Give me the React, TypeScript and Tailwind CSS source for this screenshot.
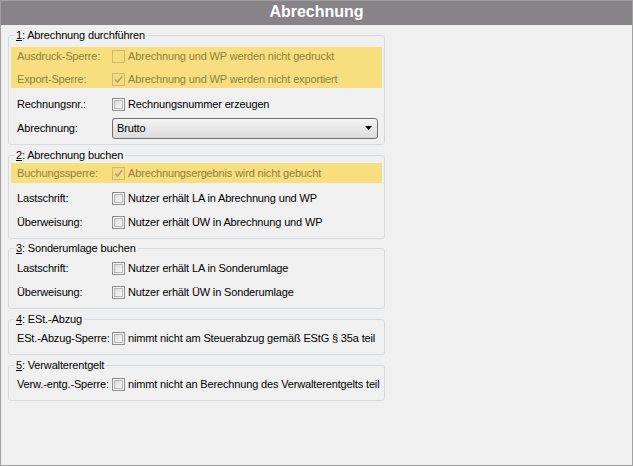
import React from "react";

const Check = ({ disabled, checked }: { disabled?: boolean; checked?: boolean }) => {
  if (disabled) {
    return (
      <div className="w-[13px] h-[13px] shrink-0 border border-[#cdb96c] bg-[#f4dc83] flex items-center justify-center">
        {checked && (
          <svg width="9" height="9" viewBox="0 0 9 9">
            <polyline points="1,4.5 3.5,7 8,1.5" fill="none" stroke="#b3a25e" strokeWidth="1.6" />
          </svg>
        )}
      </div>
    );
  }
  return (
    <div className="w-[13px] h-[13px] shrink-0 border border-[#8e8f8f] bg-[#f4f4f4] p-[1px]">
      <div className="w-full h-full border border-[#b9b9b9] bg-gradient-to-br from-[#d9d9d9] to-[#fafafa]" />
    </div>
  );
};

type RowProps = {
  label: string;
  text: string;
  checked?: boolean;
  disabled?: boolean;
  cls: string;
};

const Row = ({ label, text, checked, disabled, cls }: RowProps) => (
  <div className={`flex items-center ${cls} ${disabled ? "text-[#8d7f45]" : "text-black"}`}>
    <span className="w-[95px] shrink-0 whitespace-nowrap">{label}</span>
    <Check disabled={disabled} checked={checked} />
    <span className="ml-[3px] whitespace-nowrap">{text}</span>
  </div>
);

const Legend = ({ n, title }: { n: string; title: string }) => (
  <legend className="ml-[5px] px-[2px] leading-[13px] text-black">
    <span className="underline">{n}</span>: {title}
  </legend>
);

export default function App() {
  return (
    <div className="w-[633px] h-[466px] border border-[#a0a0a0] bg-[#f0f0f0] flex flex-col font-['Liberation_Sans',Arial,sans-serif] text-[11px] leading-[13px] tracking-[-0.15px] overflow-hidden">
      <div className="h-[24px] shrink-0 bg-[#868486] flex items-center justify-center pb-[2px] text-white font-bold text-[16px] leading-[18px] tracking-normal">
        Abrechnung
      </div>

      <fieldset className="ml-[7px] mt-[4px] w-[377px] min-w-0 border border-[#d3dbe0] rounded-[3px] pb-[4px]">
        <Legend n="1" title="Abrechnung durchführen" />
        <div className="mx-[2px] mt-[5px] h-[41px] bg-[#f7df7f] flex flex-col">
          <Row cls="pl-[6px] h-[18px]" label="Ausdruck-Sperre:" text="Abrechnung und WP werden nicht gedruckt" disabled />
          <Row cls="pl-[6px] mt-[6px] h-[17px]" label="Export-Sperre:" text="Abrechnung und WP werden nicht exportiert" disabled checked />
        </div>
        <Row cls="pl-[8px] mt-[4px] h-[24px]" label="Rechnungsnr.:" text="Rechnungsnummer erzeugen" />
        <div className="flex items-center pl-[8px] h-[24px]">
          <span className="w-[95px] shrink-0">Abrechnung:</span>
          <div className="w-[266px] h-[21px] border border-[#707070] rounded-[3px] bg-gradient-to-b from-[#f4f4f4] to-[#dcdcdc] flex items-center justify-between pl-[4px] pr-[5px]">
            <span>Brutto</span>
            <svg width="7" height="4" viewBox="0 0 7 4">
              <polygon points="0,0 7,0 3.5,4" fill="#000" />
            </svg>
          </div>
        </div>
      </fieldset>

      <fieldset className="ml-[7px] mt-[4px] w-[377px] min-w-0 border border-[#d3dbe0] rounded-[3px] pb-[4px]">
        <Legend n="2" title="Abrechnung buchen" />
        <div className="mx-[2px] mt-[1px] h-[20px] bg-[#f7df7f] flex flex-col justify-center">
          <Row cls="pl-[6px] h-[20px]" label="Buchungssperre:" text="Abrechnungsergebnis wird nicht gebucht" disabled checked />
        </div>
        <Row cls="pl-[8px] mt-[3px] h-[24px]" label="Lastschrift:" text="Nutzer erhält LA in Abrechnung und WP" />
        <Row cls="pl-[8px] h-[24px]" label="Überweisung:" text="Nutzer erhält ÜW in Abrechnung und WP" />
      </fieldset>

      <fieldset className="ml-[7px] mt-[3px] w-[377px] min-w-0 border border-[#d3dbe0] rounded-[3px] pb-[4px]">
        <Legend n="3" title="Sonderumlage buchen" />
        <Row cls="pl-[8px] mt-[1px] h-[24px]" label="Lastschrift:" text="Nutzer erhält LA in Sonderumlage" />
        <Row cls="pl-[8px] h-[24px]" label="Überweisung:" text="Nutzer erhält ÜW in Sonderumlage" />
      </fieldset>

      <fieldset className="ml-[7px] mt-[4px] w-[377px] min-w-0 border border-[#d3dbe0] rounded-[3px] pb-[4px]">
        <Legend n="4" title="ESt.-Abzug" />
        <Row cls="pl-[8px] h-[24px]" label="ESt.-Abzug-Sperre:" text="nimmt nicht am Steuerabzug gemäß EStG § 35a teil" />
      </fieldset>

      <fieldset className="ml-[7px] mt-[4px] w-[377px] min-w-0 border border-[#d3dbe0] rounded-[3px] pb-[4px]">
        <Legend n="5" title="Verwalterentgelt" />
        <Row cls="pl-[8px] h-[24px]" label="Verw.-entg.-Sperre:" text="nimmt nicht an Berechnung des Verwalterentgelts teil" />
      </fieldset>
    </div>
  );
}
